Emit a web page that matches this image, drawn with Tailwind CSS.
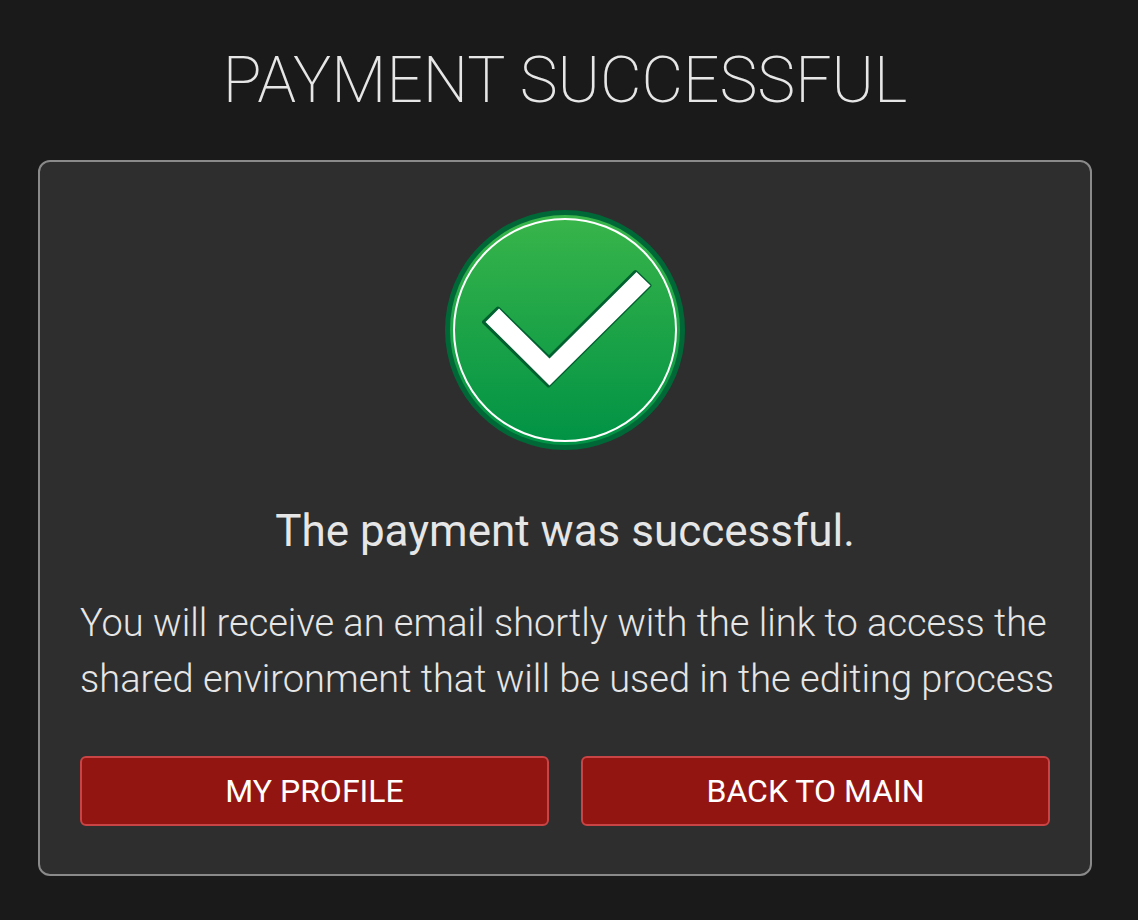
<!DOCTYPE html>
<html lang="en">
<head>
    <meta charset="UTF-8">
    <meta name="viewport" content="width=device-width, initial-scale=1.0">
    <title>Payment Successful</title>
    <script src="https://cdn.jsdelivr.net/npm/@tailwindcss/browser@4"></script>
</head>
<body class="bg-[#1a1a1a] min-h-screen font-['Roboto',sans-serif] text-[#e6e6e6]">
    <main class="pl-[38px] pr-[46px] pt-10 pb-11">
        <h1 class="text-center text-[64px] leading-[82px] font-extralight uppercase">Payment successful</h1>

        <div class="mt-[38px] px-10 py-12 bg-[#2e2e2e] border-2 border-[#8a8a8a] rounded-xl">
            <svg class="block mx-auto w-60 h-60" viewBox="0 0 240 240" fill="none" xmlns="http://www.w3.org/2000/svg" role="img" aria-label="Success">
                <defs>
                    <linearGradient id="green" x1="0" y1="0" x2="0" y2="1">
                        <stop offset="0" stop-color="#39b54a"/>
                        <stop offset="1" stop-color="#009245"/>
                    </linearGradient>
                </defs>
                <circle cx="120" cy="120" r="120" fill="#006837"/>
                <circle cx="120" cy="120" r="115" fill="url(#green)"/>
                <circle cx="120" cy="120" r="111" stroke="#fff" stroke-width="2"/>
                <path d="M39 112L53 98.500L104 148L190.500 62L204.500 75.500L103.500 175.500Z" fill="#00602f" stroke="#00602f" stroke-width="4" stroke-linejoin="round"/>
                <path d="M40.500 112L54 98.500L104.500 148.500L191.500 62L205.500 75.500L104.500 175.500Z" fill="#fff"/>
            </svg>

            <h2 class="mt-12 text-center text-[44px] leading-[66px] font-normal">The payment was successful.</h2>
            <p class="mt-[31px] -mr-2 text-[38px] leading-[56px] font-light">You will receive an email shortly with the link to access the shared environment that will be used in the editing process</p>

            <div class="mt-[49px] grid grid-cols-2 gap-8">
                <button type="button" class="h-[70px] bg-[#931512] border-2 border-[#c94444] rounded-md text-white text-[32px] uppercase cursor-pointer">My profile</button>
                <button type="button" class="h-[70px] bg-[#931512] border-2 border-[#c94444] rounded-md text-white text-[32px] uppercase cursor-pointer">Back to main</button>
            </div>
        </div>
    </main>
</body>
</html>
